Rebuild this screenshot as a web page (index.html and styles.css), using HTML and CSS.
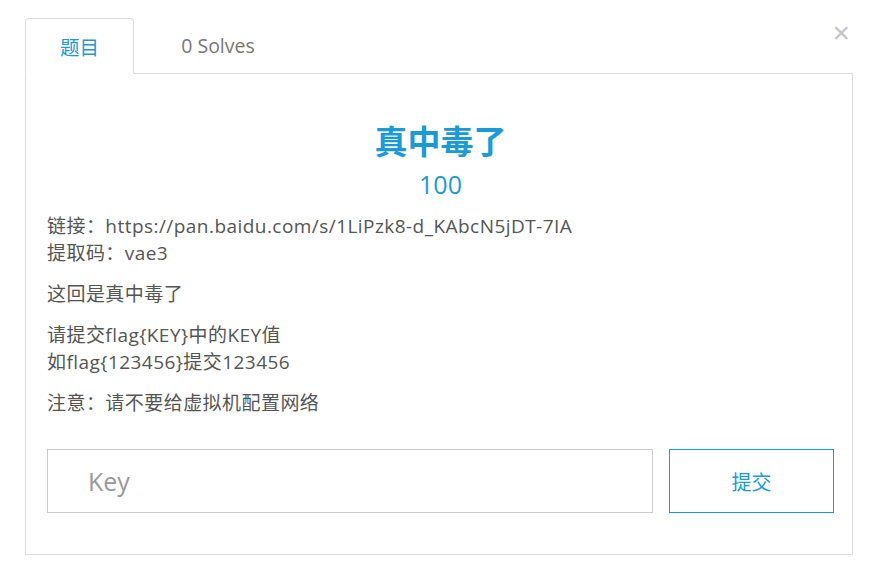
FILE: index.html
```html
<!DOCTYPE html>
<html lang="zh-CN">
<head>
    <meta charset="UTF-8">
    <title>真中毒了</title>
    <link rel="stylesheet" href="styles.css">
</head>
<body>
    <div class="challenge">
        <span class="close">&times;</span>

        <div class="tabs">
            <div class="tab active">题目</div>
            <div class="tab">0 Solves</div>
            <div class="tab-rest"></div>
        </div>

        <div class="panel">
            <h2 class="title">真中毒了</h2>
            <div class="points">100</div>

            <div class="desc">
                <p>链接：https://pan.baidu.com/s/1LiPzk8-d_KAbcN5jDT-7IA<br>提取码：vae3</p>
                <p>这回是真中毒了</p>
                <p>请提交flag{KEY}中的KEY值<br>如flag{123456}提交123456</p>
                <p>注意：请不要给虚拟机配置网络</p>
            </div>

            <div class="submit-row">
                <input type="text" class="key-input" placeholder="Key">
                <button class="submit-btn">提交</button>
            </div>
        </div>
    </div>
</body>
</html>
```

FILE: styles.css
```css
* {
    margin: 0;
    padding: 0;
    box-sizing: border-box;
}

body {
    font-family: 'Open Sans', 'Noto Sans CJK SC', sans-serif;
    background: white;
    color: #555;
}

.challenge {
    position: relative;
    width: 828px;
    margin: 18px 0 0 25px;
}

.close {
    position: absolute;
    top: 0;
    right: 3px;
    font-size: 30px;
    line-height: 30px;
    color: #c4c4c4;
    font-family: 'Liberation Sans', sans-serif;
}

.tabs {
    display: flex;
    height: 56px;
}

.tab {
    display: flex;
    align-items: center;
    justify-content: center;
    font-size: 19.5px;
    color: #777;
    border-bottom: 1px solid #ddd;
}

.tab.active {
    width: 109px;
    color: #1a9ad6;
    border: 1px solid #ddd;
    border-bottom-color: transparent;
    border-radius: 4px 4px 0 0;
}

.tab + .tab {
    width: 168px;
}

.tab-rest {
    flex: 1;
    border-bottom: 1px solid #ddd;
}

.panel {
    border: 1px solid #ddd;
    border-top: none;
    padding: 48px 18px 41px 21px;
}

.title {
    text-align: center;
    font-size: 33px;
    line-height: 40px;
    font-weight: bold;
    color: #1a9ad6;
    margin-bottom: 5px;
}

.points {
    text-align: center;
    font-size: 25px;
    line-height: 34px;
    color: #1a9ad6;
    margin-bottom: 12px;
}

.desc p {
    font-size: 19px;
    line-height: 27px;
    letter-spacing: 0.45px;
    margin-bottom: 14px;
}

.submit-row {
    display: flex;
    gap: 16px;
    margin-top: 32px;
}

.key-input {
    flex: 1;
    height: 64px;
    border: 1px solid #ccc;
    padding: 0 40px;
    font-family: 'Open Sans', sans-serif;
    font-size: 25px;
    color: #555;
    outline: none;
}

.key-input::placeholder {
    color: #999;
}

.submit-btn {
    width: 165px;
    height: 64px;
    background: white;
    border: 1px solid #1a9ad6;
    color: #1a9ad6;
    font-family: 'Open Sans', 'Noto Sans CJK SC', sans-serif;
    font-size: 20px;
}
```
